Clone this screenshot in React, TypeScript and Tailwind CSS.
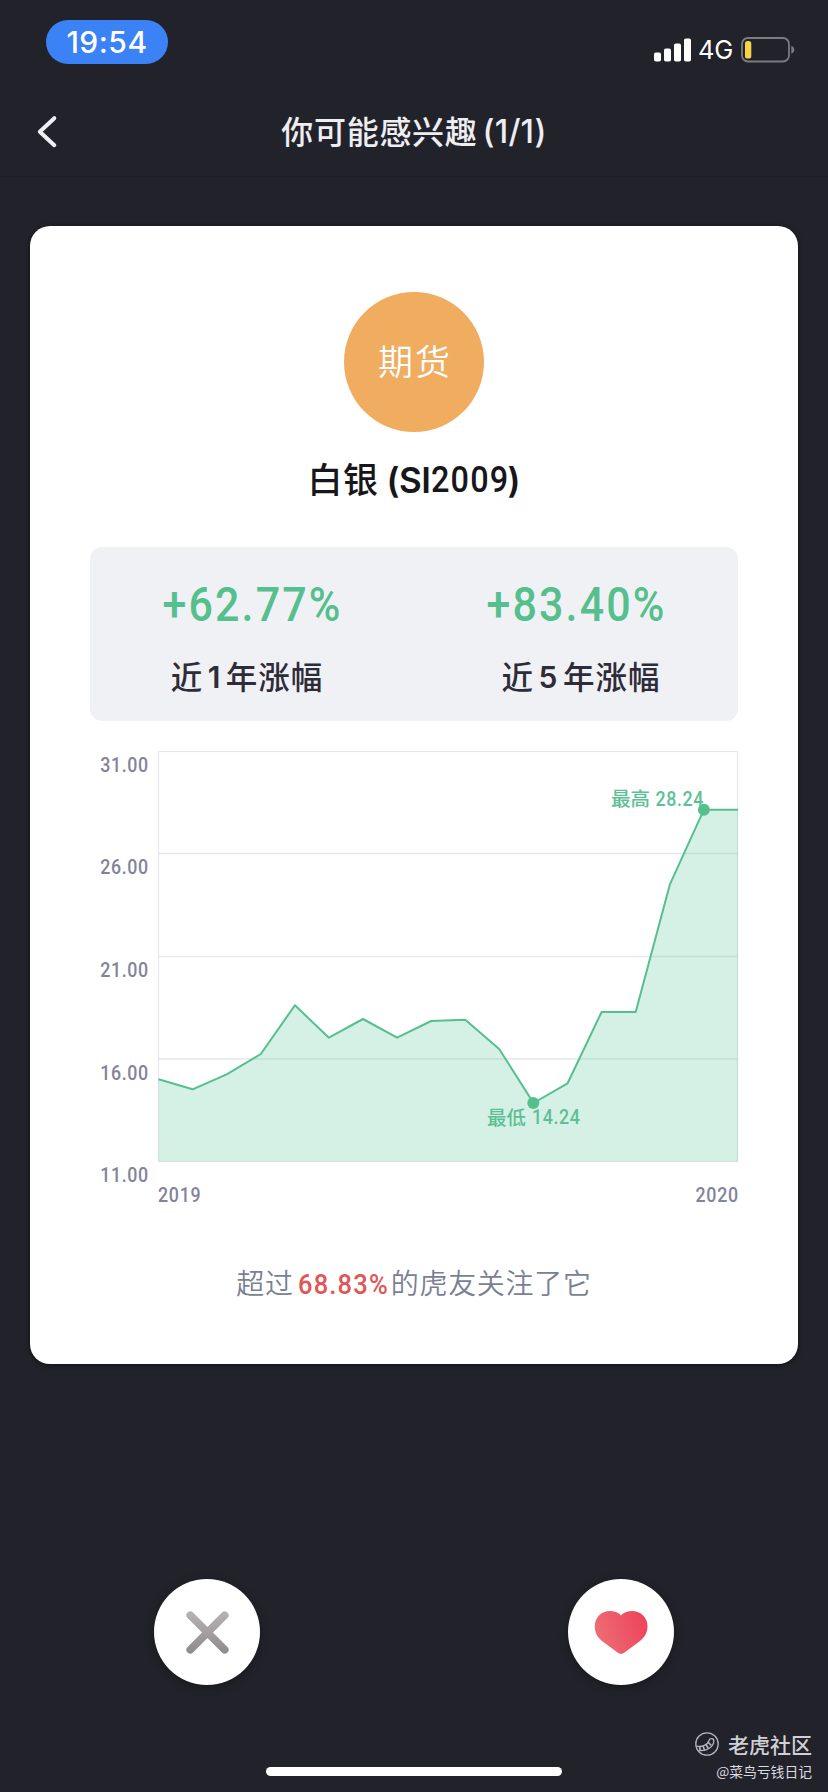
import React from "react";

const X0 = 158.5;
const X1 = 738;
const values = [
  1079.3, 1089.3, 1074.3, 1054, 1005.3, 1037.7, 1019, 1037.7, 1021, 1019.7,
  1049.3, 1103, 1083.3, 1012, 1012, 884.7, 809.7, 809.7,
];
const step = (X1 - X0) / (values.length - 1);
const line = values.map((y, i) => `${(X0 + i * step).toFixed(1)},${y}`).join(" ");

const ticks = [
  { label: "31.00", y: 771.5 },
  { label: "26.00", y: 874 },
  { label: "21.00", y: 977 },
  { label: "16.00", y: 1080 },
  { label: "11.00", y: 1182 },
];

function StatusBar() {
  return (
    <div className="flex h-[84px] items-start justify-between pt-5 pr-[33px] pl-[46px]">
      <div className="flex h-11 w-[122px] items-center justify-center rounded-[22px] bg-[#3b82f6] font-[Inter] text-[30px] leading-none font-medium tracking-[0.5px] text-white">
        19:54
      </div>
      <div className="flex items-center pt-[17px]">
        <svg width="37" height="24" viewBox="0 0 37 24" fill="#fff">
          <rect x="0" y="14.5" width="7" height="9" rx="1.8" />
          <rect x="10" y="10.5" width="7" height="13" rx="1.8" />
          <rect x="20" y="5.5" width="7" height="18" rx="1.8" />
          <rect x="30" y="0.5" width="7" height="23" rx="1.8" />
        </svg>
        <span className="ml-[7px] w-[43px] font-[Inter] text-[25.5px] leading-6 tracking-[-0.1px] text-white">4G</span>
        <svg width="54" height="26" viewBox="0 0 54 26">
          <rect x="1" y="1" width="47" height="23.5" rx="6" fill="none" stroke="#7b7b80" strokeWidth="1.8" />
          <rect x="4" y="4" width="6.3" height="17.5" rx="2.6" fill="#f5d547" />
          <path d="M50.3 8.8c4 1.5 4 6.500 0 8z" fill="#7b7b80" />
        </svg>
      </div>
    </div>
  );
}

function Header() {
  return (
    <header className="grid h-[93px] grid-cols-[100px_1fr_100px] items-center border-b border-[#1f1f27]">
      <svg width="60" height="40" viewBox="0 0 60 40" className="mt-1">
        <path d="M54.300 6.200L39.800 19.700L54.300 33.200" fill="none" stroke="#f0f0f4" strokeWidth="4" strokeLinecap="round" strokeLinejoin="round" />
      </svg>
      <h1 className="flex items-center justify-center leading-none font-medium text-[#ededf2]">
        <span className="text-[32px] tracking-[0.7px]">你可能感兴趣</span>
        <span className="ml-[5px] pt-1 font-[Inter] text-[32.500px] tracking-[0.2px]">(1/1)</span>
      </h1>
    </header>
  );
}

function Stat({ value, period, className }: { value: string; period: string; className: string }) {
  return (
    <div className="flex flex-1 flex-col items-center pt-[34px]">
      <div className="h-12 scale-x-[0.895] pl-0.5 font-[Roboto] text-[48px] leading-[48px] font-medium tracking-[2.4px] text-[#55bf8d]">{value}</div>
      <div className={`mt-[28px] flex h-9 items-center text-[31.500px] leading-9 font-medium text-[#2d2c38] ${className}`}>
        <span>近</span>
        <span className="mx-[5.5px] pt-[3px] font-[Inter] text-[30px] font-semibold">{period}</span>
        <span className="tracking-[1px]">年涨幅</span>
      </div>
    </div>
  );
}

const CONDENSE = 0.89;

function Num({ x, y, width, children }: { x: number; y: number; width: number; children: string }) {
  return (
    <text transform={`translate(${x} ${y}) scale(${CONDENSE} 1)`} textLength={width / CONDENSE}>
      {children}
    </text>
  );
}

function Chart() {
  return (
    <svg width="648" height="480" viewBox="90 740 648 480" className="block overflow-visible font-[Roboto,'Noto_Sans_CJK_SC',sans-serif]">
      <g stroke="#e6e8ed" strokeWidth="1.2" fill="none">
        <rect x={X0} y="751.500" width={X1 - X0 - 0.5} height="410" />
        <path d="M158.500 853.500H738M158.500 956.500H738M158.500 1059H738" strokeWidth="1.4" />
      </g>
      <polygon points={`${X0},1161.5 ${line} ${X1},1161.5`} fill="#57c596" fillOpacity="0.25" />
      <polyline points={line} fill="none" stroke="#55bf8f" strokeWidth="2" strokeLinejoin="round" />
      <circle cx="533.300" cy="1103" r="6" fill="#55bf8d" />
      <circle cx="703.900" cy="809.700" r="6" fill="#55bf8d" />
      <g fontSize="20" fontWeight="500" fill="#828499">
        {ticks.map((t) => (
          <Num key={t.label} x={100.3} y={t.y} width={47.9}>{t.label}</Num>
        ))}
        <Num x={158} y={1202} width={42.7}>2019</Num>
        <Num x={695.5} y={1202} width={42.7}>2020</Num>
      </g>
      <g fontSize="20" fontWeight="500" fill="#5cc095">
        <text x="611" y="806" fontSize="19.500">最高</text>
        <Num x={655.5} y={806} width={48}>28.24</Num>
        <text x="487" y="1124.500" fontSize="19.500">最低</text>
        <Num x={532} y={1124} width={48}>14.24</Num>
      </g>
    </svg>
  );
}

function Card() {
  return (
    <main className="mx-[30px] mt-[49px] flex h-[1138px] flex-col items-center rounded-[20px] bg-white px-[60px] pt-[66px] shadow-[0_1px_5px_rgba(0,0,0,0.6)]">
      <div className="flex size-[140px] shrink-0 items-center justify-center rounded-full bg-[#f0ac5f] pb-[5px] pl-0.5 text-[35px] leading-none font-[350] tracking-[2px] text-white">
        期货
      </div>
      <h2 className="mt-[29px] flex h-[38px] items-center leading-[38px] text-[#17171b]">
        <span className="pb-[5px] text-[35px] font-medium tracking-[0.5px]">白银</span>
        <span className="ml-[8px] font-[Inter] text-[35px] font-semibold tracking-[-0.5px]">(SI</span>
        <span className="ml-px w-[76px] origin-left scale-x-[0.9] font-[Roboto] text-[36px] font-medium tracking-[1.300px]">2009</span>
        <span className="font-[Inter] text-[35px] font-semibold">)</span>
      </h2>
      <section className="mt-12 flex h-[174px] w-full shrink-0 rounded-xl bg-[#f0f1f5]">
        <Stat value="+62.77%" period="1" className="pr-[10px]" />
        <Stat value="+83.40%" period="5" className="pl-[10px]" />
      </section>
      <div className="mt-[19px]">
        <Chart />
      </div>
      <p className="mt-[46px] flex h-9 items-center text-[28px] leading-9 font-[350] text-[#7a7f95]">
        <span className="pb-[4px] tracking-[0.7px]">超过</span>
        <span className="mr-[3px] ml-[4px] w-[90px] origin-left scale-x-[0.91] pt-px font-[Roboto] text-[28px] font-medium tracking-[1.300px] text-[#e05555]">68.83%</span>
        <span className="pb-[4px] tracking-[0.7px]">的虎友关注了它</span>
      </p>
    </main>
  );
}

function Actions() {
  return (
    <div className="mt-[215px] flex justify-between px-[154px]">
      <button aria-label="dislike" className="size-[106px] rounded-full bg-white shadow-[0_2px_8px_rgba(0,0,0,0.35)]">
        <svg width="106" height="106" viewBox="0 0 106 106">
          <defs>
            <linearGradient id="cross" gradientUnits="userSpaceOnUse" x1="53" y1="33" x2="53" y2="74">
              <stop offset="0" stopColor="#b8b2b2" />
              <stop offset="1" stopColor="#8f8b8e" />
            </linearGradient>
          </defs>
          <path d="M36.300 36.300L70.700 70.700M70.700 36.300L36.300 70.700" stroke="url(#cross)" strokeWidth="7.800" strokeLinecap="round" />
        </svg>
      </button>
      <button aria-label="like" className="size-[106px] rounded-full bg-white shadow-[0_2px_8px_rgba(0,0,0,0.35)]">
        <svg width="106" height="106" viewBox="0 0 106 106">
          <defs>
            <linearGradient id="heart" x1="0" y1="0.650" x2="1" y2="0.350">
              <stop offset="0" stopColor="#ec6f75" />
              <stop offset="1" stopColor="#ee445c" />
            </linearGradient>
          </defs>
          <path d="M53 36.400C56 33.200 60 32 64 32C73 32 79.500 38.500 79.500 47.500C79.500 53.500 76.500 58.500 72 62L56.500 73.600C54 75.500 52 75.500 49.500 73.600L34 62C29.500 58.500 26.800 53.500 26.800 47.500C26.800 38.500 33 32 42 32C46 32 50 33.200 53 36.400Z" fill="url(#heart)" />
        </svg>
      </button>
    </div>
  );
}

function Watermark() {
  return (
    <div className="absolute right-[16px] bottom-[12px] flex flex-col items-end text-[#d0d0d6]">
      <div className="flex items-center">
        <svg width="24" height="24" viewBox="0 0 24 24" fill="none" stroke="#b4b4ba" className="mr-[9px]">
          <circle cx="12" cy="12" r="11.200" strokeWidth="1.300" />
          <path d="M1.500 14C6 15.500 12.500 13.500 14 8.500C14.800 5.800 19 6 18.800 9.500C18.300 14.500 12 19.500 4 18.500" strokeWidth="1.300" />
          <path d="M4.500 14.500L5.500 18.500M8 14L9.500 18M11 12.500L13.200 16.200M13.300 10.500L16.300 13.300" strokeWidth="1.700" />
        </svg>
        <span className="text-[21px] leading-6 font-medium">老虎社区</span>
      </div>
      <span className="mt-[6px] text-[13.800px] leading-[18px] text-[#dcdce0]">@菜鸟亏钱日记</span>
    </div>
  );
}

export default function App() {
  return (
    <div className="relative flex h-[1792px] w-[828px] flex-col overflow-hidden bg-[#22222a] font-['Noto_Sans_CJK_SC',sans-serif]">
      <StatusBar />
      <Header />
      <Card />
      <Actions />
      <div className="mx-auto mt-auto mb-4 h-[9px] w-[296px] rounded-full bg-white" />
      <Watermark />
    </div>
  );
}
